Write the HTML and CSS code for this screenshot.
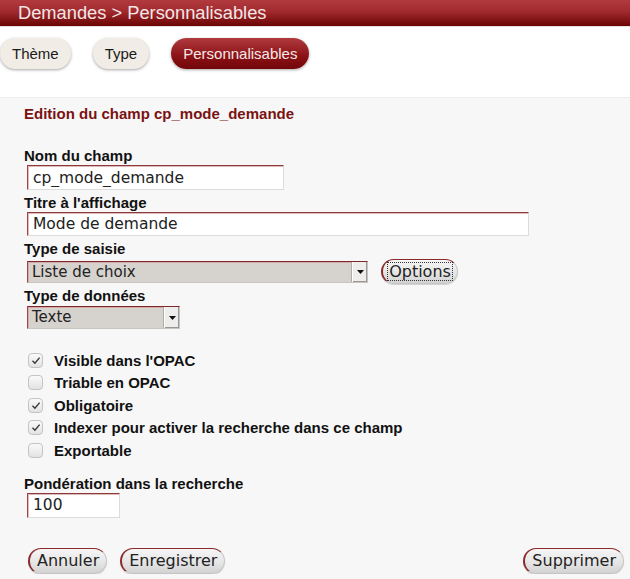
FILE: index.html
```html
<!DOCTYPE html>
<html lang="fr">
<head>
<meta charset="utf-8">
<title>Demandes > Personnalisables</title>
<link rel="stylesheet" href="styles.css">
</head>
<body>
<header class="topbar">Demandes &gt; Personnalisables</header>
<nav class="tabs">
  <a class="tab">Thème</a>
  <a class="tab">Type</a>
  <a class="tab active">Personnalisables</a>
</nav>
<main class="panel">
  <h1 class="title">Edition du champ cp_mode_demande</h1>
  <form class="form">
    <label class="lbl">Nom du champ</label>
    <input class="txt w-name" type="text" value="cp_mode_demande">
    <label class="lbl">Titre à l'affichage</label>
    <input class="txt w-title" type="text" value="Mode de demande">
    <label class="lbl">Type de saisie</label>
    <div class="row">
      <div class="sel w-saisie"><span class="sel-val">Liste de choix</span><span class="sel-arrow"><svg width="7" height="4" viewBox="0 0 7 4"><path d="M0 0h7L3.5 4z" fill="#111"/></svg></span></div>
      <button type="button" class="btn opt"><span class="focus">Options</span></button>
    </div>
    <label class="lbl">Type de données</label>
    <div class="sel w-data"><span class="sel-val">Texte</span><span class="sel-arrow"><svg width="7" height="4" viewBox="0 0 7 4"><path d="M0 0h7L3.5 4z" fill="#111"/></svg></span></div>

    <div class="checks">
      <div class="chk"><span class="box"><svg width="10" height="9" viewBox="0 0 10 9"><path d="M1.5 4.8l2.4 2.4L8.6 1.6" fill="none" stroke="#333" stroke-width="1.3"/></svg></span>Visible dans l'OPAC</div>
      <div class="chk"><span class="box"></span>Triable en OPAC</div>
      <div class="chk"><span class="box"><svg width="10" height="9" viewBox="0 0 10 9"><path d="M1.5 4.8l2.4 2.4L8.6 1.6" fill="none" stroke="#333" stroke-width="1.3"/></svg></span>Obligatoire</div>
      <div class="chk"><span class="box"><svg width="10" height="9" viewBox="0 0 10 9"><path d="M1.5 4.8l2.4 2.4L8.6 1.6" fill="none" stroke="#333" stroke-width="1.3"/></svg></span>Indexer pour activer la recherche dans ce champ</div>
      <div class="chk"><span class="box"></span>Exportable</div>
    </div>

    <label class="lbl">Pondération dans la recherche</label>
    <input class="txt w-pond" type="text" value="100">

    <div class="actions">
      <button type="button" class="btn">Annuler</button>
      <button type="button" class="btn">Enregistrer</button>
      <span class="spacer"></span>
      <button type="button" class="btn">Supprimer</button>
    </div>
  </form>
</main>
</body>
</html>
```
FILE: styles.css
```css
html, body {
  margin: 0;
  padding: 0;
  background: #f7f7f7;
  font-family: "Liberation Sans", Arial, sans-serif;
}
.topbar {
  height: 26px;
  line-height: 26px;
  padding-left: 18px;
  font-size: 18.3px;
  color: #f3e6e6;
  background: linear-gradient(#b13a3e 0%, #a02a2e 45%, #6c0404 100%);
  border-bottom: 1px solid #e8e0e0;
}
.tabs {
  background: #fff;
  height: 70px;
  display: flex;
  align-items: flex-start;
  gap: 22px;
  padding-top: 11px;
  box-sizing: border-box;
}
.tab {
  display: block;
  height: 31px;
  line-height: 31px;
  padding: 0 12px;
  border-radius: 16px;
  font-size: 15px;
  color: #1a1a1a;
  background: #f1ede6;
  box-shadow: 0 1px 3px rgba(0,0,0,0.35);
}
.tab.active {
  color: #f6e8e8;
  background: linear-gradient(#b03a3e, #8a1216 60%, #720608);
}
.panel {
  border-top: 1px solid #ececec;
  padding: 6px 0 0 24px;
}
.title {
  margin: 0;
  font-size: 15px;
  font-weight: bold;
  color: #7a1212;
  line-height: 20px;
}
.form {
  display: flex;
  flex-direction: column;
  align-items: flex-start;
  padding-top: 23px;
}
.lbl {
  display: block;
  font-size: 15px;
  font-weight: bold;
  color: #111;
  line-height: 17px;
}
.txt {
  margin: 0 0 0 3px;
  box-sizing: border-box;
  height: 25px;
  padding: 0 5px;
  font-family: "DejaVu Sans", sans-serif;
  font-size: 15.5px;
  color: #222;
  background: #fff;
  border: 1px solid #dcdcdc;
  border-top: 1px solid #8a3a3a;
  border-left: 1px solid #a04848;
  box-shadow: inset 1px 1px 0 #e2b8b8;
  outline: none;
}
.w-name { width: 257px; }
.w-title { width: 502px; height: 24px; }
.w-pond { width: 93px; }
.lbl + .txt { margin-top: 1px; }
.txt + .lbl { margin-top: 4px; }
.row {
  display: flex;
  align-items: center;
  gap: 13px;
  margin-top: 2px;
}
.sel {
  margin-left: 3px;
  box-sizing: border-box;
  display: flex;
  height: 23px;
  background: #d6d2ce;
  border: 1px solid #c8c4c0;
  border-top: 1px solid #7a2a2a;
  border-left: 1px solid #a04848;
  box-shadow: inset 1px 1px 0 #d8a8a8;
  font-family: "DejaVu Sans", sans-serif;
  font-size: 15px;
  color: #222;
}
.sel-val {
  flex: 1;
  line-height: 21px;
  padding-left: 4px;
}
.sel-arrow {
  width: 14px;
  background: #efedeb;
  border-left: 1px solid #ffffff;
  box-shadow: inset -1px -1px 0 #9a9896, -1px 0 0 #b0aca8;
  display: flex;
  align-items: center;
  justify-content: center;
}
.w-saisie { width: 341px; height: 22px; }
.w-data { width: 153px; margin-top: 2px; }
.row + .lbl { margin-top: 3px; }
.btn {
  box-sizing: border-box;
  height: 26px;
  padding: 0 7px;
  border-radius: 13px;
  font-family: "DejaVu Sans", sans-serif;
  font-size: 16px;
  color: #222;
  background: linear-gradient(#f6f6f6, #e4e4e4 60%, #d2d2d2);
  border: 1px solid #c4c4c4;
  border-top: 1px solid #8a2a2a;
  border-left: 2px solid #8a2a2a;
  box-shadow: 0 1px 1px rgba(0,0,0,0.15);
  cursor: pointer;
}
.opt {
  height: 25px;
  width: 77px;
  padding: 0 2px;
}
.focus {
  display: inline-block;
  border: 1px dotted #333;
  padding: 0 1px;
  line-height: 17px;
}
.checks {
  margin-top: 20px;
  display: flex;
  flex-direction: column;
}
.chk {
  display: flex;
  align-items: center;
  height: 22.5px;
  font-size: 15px;
  font-weight: bold;
  color: #111;
}
.box {
  box-sizing: border-box;
  width: 15px;
  height: 15px;
  margin: 0 11px 0 4px;
  border-radius: 4px;
  border: 1px solid #c4c4c4;
  background: linear-gradient(#fafafa, #e2e2e2);
  display: flex;
  align-items: center;
  justify-content: center;
}
.checks + .lbl { margin-top: 13px; }
.actions {
  align-self: stretch;
  display: flex;
  gap: 13px;
  margin-top: 30px;
  padding: 0 6px 0 4px;
}
.spacer { flex: 1; }
```
